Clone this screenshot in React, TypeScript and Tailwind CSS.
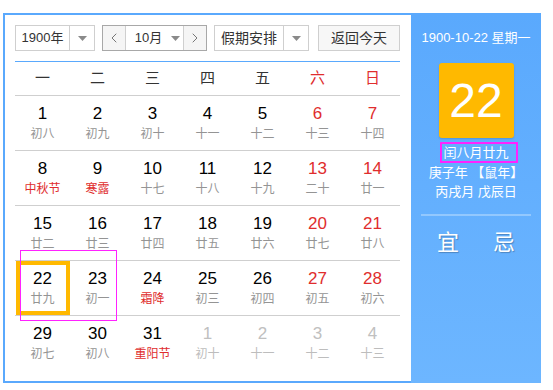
import { ChevronLeft, ChevronRight } from 'lucide-react';

type Day = {
  n: number;
  lunar: string;
  weekend?: boolean;
  festival?: boolean;
  other?: boolean;
  today?: boolean;
};

const weekdays = ['一', '二', '三', '四', '五', '六', '日'];

const rows: Day[][] = [
  [
    { n: 1, lunar: '初八' },
    { n: 2, lunar: '初九' },
    { n: 3, lunar: '初十' },
    { n: 4, lunar: '十一' },
    { n: 5, lunar: '十二' },
    { n: 6, lunar: '十三', weekend: true },
    { n: 7, lunar: '十四', weekend: true },
  ],
  [
    { n: 8, lunar: '中秋节', festival: true },
    { n: 9, lunar: '寒露', festival: true },
    { n: 10, lunar: '十七' },
    { n: 11, lunar: '十八' },
    { n: 12, lunar: '十九' },
    { n: 13, lunar: '二十', weekend: true },
    { n: 14, lunar: '廿一', weekend: true },
  ],
  [
    { n: 15, lunar: '廿二' },
    { n: 16, lunar: '廿三' },
    { n: 17, lunar: '廿四' },
    { n: 18, lunar: '廿五' },
    { n: 19, lunar: '廿六' },
    { n: 20, lunar: '廿七', weekend: true },
    { n: 21, lunar: '廿八', weekend: true },
  ],
  [
    { n: 22, lunar: '廿九', today: true },
    { n: 23, lunar: '初一' },
    { n: 24, lunar: '霜降', festival: true },
    { n: 25, lunar: '初三' },
    { n: 26, lunar: '初四' },
    { n: 27, lunar: '初五', weekend: true },
    { n: 28, lunar: '初六', weekend: true },
  ],
  [
    { n: 29, lunar: '初七' },
    { n: 30, lunar: '初八' },
    { n: 31, lunar: '重阳节', festival: true },
    { n: 1, lunar: '初十', other: true },
    { n: 2, lunar: '十一', other: true },
    { n: 3, lunar: '十二', other: true },
    { n: 4, lunar: '十三', other: true },
  ],
];

function Caret() {
  return (
    <svg width="9" height="5" viewBox="0 0 9 5">
      <path d="M0 0 L9 0 L4.5 5 Z" fill="#8a8a8a" />
    </svg>
  );
}

function DayCell({ d }: { d: Day }) {
  const numColor = d.other ? 'text-[#c0c0c0]' : d.weekend ? 'text-[#e02d2d]' : 'text-black';
  const lunarColor = d.other
    ? 'text-[#bdbdbd]'
    : d.festival
      ? 'text-[#e02d2d]'
      : 'text-[#949494]';
  return (
    <div
      className={`flex flex-col items-center justify-center ${
        d.today ? 'border-[4px] border-[#ffb900] w-[54px] h-[54px]' : ''
      }`}
    >
      <div className={`text-[17px] leading-[20px] ${numColor}`}>{d.n}</div>
      <div className={`text-[12px] leading-[16px] mt-[2px] ${lunarColor}`}>{d.lunar}</div>
    </div>
  );
}

export default function App() {
  return (
    <div
      className="relative w-[553px] h-[390px] bg-white pt-[13px] pl-[3px]"
      style={{ fontFamily: '"Liberation Sans", "Noto Sans CJK SC", sans-serif' }}
    >
      <div className="flex w-[538px] h-[370px] border-2 border-[#5aa9fd]">
        {/* left: calendar */}
        <div className="w-[406px] pl-[10px] pr-[11px] pt-[10px]">
          <div className="flex items-center h-[26px] text-[13px] text-[#333]">
            <div className="flex w-[80px] h-[26px] border border-[#cfcfcf]">
              <div className="flex-1 flex items-center justify-center border-r border-[#cfcfcf]">
                1900年
              </div>
              <div className="w-[24px] flex items-center justify-center">
                <Caret />
              </div>
            </div>
            <div className="flex ml-[7px] w-[105px] h-[26px] border border-[#a8a8a8]">
              <div className="w-[23px] flex items-center justify-center bg-[#f5f5f5] border-r border-[#cfcfcf]">
                <ChevronLeft className="w-[16px] h-[16px] text-[#555]" strokeWidth={1.2} />
              </div>
              <div className="flex-1 flex items-center justify-center gap-[9px] pl-[6px]">
                <span>10月</span>
                <Caret />
              </div>
              <div className="w-[23px] flex items-center justify-center bg-[#f5f5f5] border-l border-[#cfcfcf]">
                <ChevronRight className="w-[16px] h-[16px] text-[#555]" strokeWidth={1.2} />
              </div>
            </div>
            <div className="flex ml-[7px] w-[95px] h-[26px] border border-[#cfcfcf] text-[14px]">
              <div className="flex-1 flex items-center justify-center border-r border-[#cfcfcf]">
                假期安排
              </div>
              <div className="w-[24px] flex items-center justify-center">
                <Caret />
              </div>
            </div>
            <div className="ml-[9px] w-[82px] h-[26px] border border-[#cfcfcf] bg-[#f7f7f7] flex items-center justify-center text-[14px]">
              返回今天
            </div>
          </div>

          <div className="mt-[10px] h-[1px] bg-[#5aa9fd]" />

          <div className="grid grid-cols-7 h-[33px] items-center text-[15px] text-[#333]">
            {weekdays.map((w, i) => (
              <div key={w} className={`text-center ${i >= 5 ? 'text-[#e02d2d]' : ''}`}>
                {w}
              </div>
            ))}
          </div>

          {rows.map((row, ri) => (
            <div key={ri} className="grid grid-cols-7 h-[55px] border-t border-[#cfcfcf]">
              {row.map((d, ci) => (
                <div key={ci} className="flex items-center justify-center">
                  <DayCell d={d} />
                </div>
              ))}
            </div>
          ))}
        </div>

        {/* right: today panel */}
        <div className="flex-1 -mt-[2px] -mr-[2px] -mb-[2px] bg-gradient-to-b from-[#5aa9fd] to-[#6db6ff] flex flex-col items-center text-white">
          <div className="mt-[17px] text-[13px] leading-[16px]">1900-10-22 星期一</div>
          <div className="mt-[17px] w-[75px] h-[75px] rounded-[3px] bg-[#ffb900] shadow-[0_1px_2px_rgba(0,0,0,0.15)] flex items-center justify-center text-[48px] leading-none">
            22
          </div>
          <div className="mt-[7px] text-[13px] leading-[16px]">闰八月廿九</div>
          <div className="mt-[4px] text-[13px] leading-[16px]">庚子年 【鼠年】</div>
          <div className="mt-[3px] text-[13px] leading-[16px]">丙戌月 戊辰日</div>
          <div className="mt-[14px] w-[110px] h-[2px] bg-white/30" />
          <div className="mt-[14px] flex gap-[34px] text-[22px] leading-[26px] [text-shadow:1px_1px_1px_rgba(0,0,0,0.25)]">
            <span>宜</span>
            <span>忌</span>
          </div>
        </div>
      </div>

      {/* highlight overlays */}
      <div className="absolute left-[20px] top-[250px] w-[97px] h-[71px] border border-[#ff22ff]" />
      <div className="absolute left-[440px] top-[142px] w-[78px] h-[21px] border-2 border-[#ff22ff]" />
    </div>
  );
}
